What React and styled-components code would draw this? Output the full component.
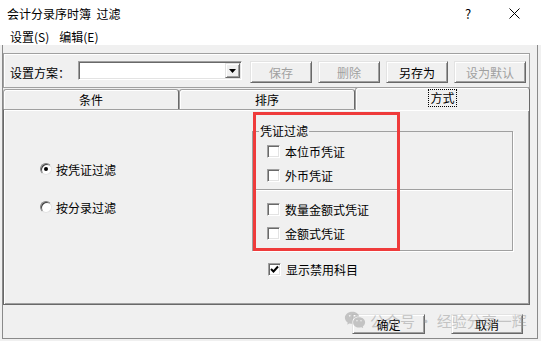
import React from "react";
import styled, { createGlobalStyle } from "styled-components";
import { RiWechatFill } from "react-icons/ri";

const GlobalStyle = createGlobalStyle`
  html, body {
    margin: 0;
    padding: 0;
    background: #f0f0f0;
  }
  body {
    font-family: "Noto Sans CJK SC", "Noto Sans", sans-serif;
    font-size: 12px;
    color: #000;
  }
`;

function App() {
  return (
    <Window>
      <GlobalStyle />
      <TitleBar>
        <TitleText>会计分录序时簿&nbsp;&nbsp;过滤</TitleText>
        <CaptionBtn>?</CaptionBtn>
        <CaptionBtn>
          <svg width="11" height="11" viewBox="0 0 11 11">
            <path d="M0.5 0.5 L10.5 10.5 M10.5 0.5 L0.5 10.5" stroke="#000" strokeWidth="1" />
          </svg>
        </CaptionBtn>
      </TitleBar>
      <MenuBar>
        <MenuItem>设置(S)</MenuItem>
        <MenuItem>编辑(E)</MenuItem>
      </MenuBar>

      <Frame>
        <Toolbar>
          <FieldLabel>设置方案：</FieldLabel>
          <Combo>
            <DropBtn>
              <svg width="7" height="4" viewBox="0 0 7 4">
                <path d="M0 0 H7 L3.5 4 Z" fill="#000" />
              </svg>
            </DropBtn>
          </Combo>
          <Button $w={62} disabled>保存</Button>
          <Button $w={62} disabled>删除</Button>
          <Button $w={62}>另存为</Button>
          <Button $w={72} disabled>设为默认</Button>
        </Toolbar>

        <TabRow>
          <Tab $w={176}>条件</Tab>
          <Tab $w={176}>排序</Tab>
          <Tab $w={175} $active>
            <Focus>方式</Focus>
          </Tab>
        </TabRow>

        <Content>
          <LeftCol>
            <RadioRow>
              <Radio $checked />
              按凭证过滤
            </RadioRow>
            <RadioRow>
              <Radio />
              按分录过滤
            </RadioRow>
          </LeftCol>
          <RightCol>
            <Group>
              <Legend>凭证过滤</Legend>
              <CheckRow>
                <Check />
                本位币凭证
              </CheckRow>
              <CheckRow>
                <Check />
                外币凭证
              </CheckRow>
              <Separator />
              <CheckRow>
                <Check />
                数量金额式凭证
              </CheckRow>
              <CheckRow>
                <Check />
                金额式凭证
              </CheckRow>
            </Group>
            <CheckRow $indent={16} $top={6}>
              <Check $checked>
                <svg width="9" height="9" viewBox="0 0 9 9">
                  <path d="M1 4 L3.5 6.5 L8 1.5" stroke="#000" strokeWidth="2" fill="none" />
                </svg>
              </Check>
              显示禁用科目
            </CheckRow>
          </RightCol>
        </Content>

        <ButtonBar>
          <Button $w={73} $h={20}>确定</Button>
          <Button $w={72} $h={20}>取消</Button>
        </ButtonBar>
      </Frame>

      <Highlight />
      <Watermark>
        <RiWechatFill size={22} />
        <span>公众号 · 经验分享一辉</span>
      </Watermark>
    </Window>
  );
}

export default App;

const Window = styled.div`
  position: relative;
  width: 541px;
  height: 341px;
  overflow: hidden;
  background: #f0f0f0;
`;

const TitleBar = styled.div`
  display: flex;
  align-items: center;
  height: 27px;
  padding: 0 4px 0 7px;
  background: #fff;
`;

const TitleText = styled.div`
  flex: 1;
  font-size: 12px;
`;

const CaptionBtn = styled.div`
  width: 46px;
  display: flex;
  align-items: center;
  justify-content: center;
  font-size: 13px;
`;

const MenuBar = styled.div`
  display: flex;
  align-items: center;
  gap: 10px;
  height: 18px;
  padding-left: 10px;
  background: #fff;
`;

const MenuItem = styled.span`
  font-size: 12px;
`;

const Frame = styled.div`
  margin-left: 2px;
  width: 536px;
  height: 294px;
  box-sizing: border-box;
  border: 1px solid #8a8a8a;
  border-top: none;
  padding-top: 8px;
  display: flex;
  flex-direction: column;
`;

const Toolbar = styled.div`
  width: 527px;
  height: 35px;
  box-sizing: border-box;
  border: 1px solid #a0a0a0;
  box-shadow: inset 1px 1px 0 #fff;
  display: flex;
  align-items: center;
  gap: 6px;
  padding: 3px 0 0 6px;
`;

const FieldLabel = styled.span`
  width: 60px;
  white-space: nowrap;
`;

const Combo = styled.div`
  width: 164px;
  height: 19px;
  box-sizing: border-box;
  margin: -3px 2px 0 2px;
  background: #fff;
  border: 1px solid;
  border-color: #a0a0a0 #fff #fff #a0a0a0;
  box-shadow: inset 1px 1px 0 #696969, inset -1px -1px 0 #e3e3e3;
  display: flex;
  justify-content: flex-end;
  align-items: center;
  padding-right: 1px;
`;

const DropBtn = styled.div`
  width: 15px;
  height: 15px;
  box-sizing: border-box;
  background: #f0f0f0;
  border: 1px solid;
  border-color: #e3e3e3 #696969 #696969 #e3e3e3;
  box-shadow: inset 1px 1px 0 #fff, inset -1px -1px 0 #a0a0a0;
  display: flex;
  align-items: center;
  justify-content: center;
`;

const Button = styled.button`
  width: ${(p) => p.$w}px;
  height: ${(p) => p.$h || 22}px;
  box-sizing: border-box;
  padding: 0;
  margin: 0;
  font-family: inherit;
  font-size: 12px;
  color: #000;
  background: #f0f0f0;
  border: 1px solid;
  border-color: #e3e3e3 #696969 #696969 #e3e3e3;
  box-shadow: inset 1px 1px 0 #fff, inset -1px -1px 0 #a0a0a0;
  &:disabled {
    color: #a0a0a0;
  }
`;

const TabRow = styled.div`
  display: flex;
  align-items: flex-end;
  width: 527px;
  height: 21px;
  position: relative;
  z-index: 1;
`;

const Tab = styled.div`
  width: ${(p) => p.$w}px;
  height: ${(p) => (p.$active ? 23 : 20)}px;
  margin-bottom: ${(p) => (p.$active ? -1 : 0)}px;
  box-sizing: border-box;
  background: #f0f0f0;
  border: 1px solid;
  border-color: #a0a0a0 #696969 transparent #a0a0a0;
  border-bottom: none;
  border-radius: 3px 3px 0 0;
  box-shadow: inset 1px 1px 0 #fff;
  display: flex;
  align-items: center;
  justify-content: center;
  padding-bottom: ${(p) => (p.$active ? 2 : 0)}px;
`;

const Focus = styled.span`
  outline: 1px dotted #000;
  outline-offset: 1px;
  line-height: 14px;
`;

const Content = styled.div`
  width: 527px;
  height: 196px;
  box-sizing: border-box;
  border: 1px solid;
  border-color: #a0a0a0 #696969 #696969 #696969;
  box-shadow: inset 1px 1px 0 #fff, inset -1px -1px 0 #a0a0a0;
  display: flex;
`;

const LeftCol = styled.div`
  width: 248px;
  padding: 49px 0 0 36px;
  box-sizing: border-box;
  display: flex;
  flex-direction: column;
  gap: 18px;
`;

const RadioRow = styled.label`
  display: flex;
  align-items: center;
  gap: 4px;
  height: 20px;
`;

const Radio = styled.span`
  position: relative;
  width: 12px;
  height: 12px;
  box-sizing: border-box;
  border-radius: 50%;
  background: #fff;
  border: 1px solid;
  border-color: #808080 #e3e3e3 #e3e3e3 #808080;
  box-shadow: inset 1px 1px 0 #404040;
  &::after {
    content: "";
    display: ${(p) => (p.$checked ? "block" : "none")};
    position: absolute;
    left: 3px;
    top: 3px;
    width: 4px;
    height: 4px;
    border-radius: 50%;
    background: #000;
  }
`;

const RightCol = styled.div`
  display: flex;
  flex-direction: column;
  padding-top: 13px;
`;

const Group = styled.fieldset`
  margin: 0;
  padding: 0 0 5px;
  width: 261px;
  min-width: 0;
  box-sizing: border-box;
  border: 1px solid #a0a0a0;
  box-shadow: 1px 1px 0 #fff;
`;

const Legend = styled.legend`
  padding: 0 1px;
  margin-left: 6px;
  line-height: 16px;
  font-size: 12px;
`;

const CheckRow = styled.label`
  display: flex;
  align-items: center;
  gap: 5px;
  height: 24px;
  padding-left: ${(p) => p.$indent || 14}px;
  margin-top: ${(p) => p.$top || 0}px;
`;

const Check = styled.span`
  width: 13px;
  height: 13px;
  box-sizing: border-box;
  background: #fff;
  border: 1px solid;
  border-color: #a0a0a0 #fff #fff #a0a0a0;
  box-shadow: inset 1px 1px 0 #696969, inset -1px -1px 0 #e3e3e3;
  display: flex;
  align-items: center;
  justify-content: center;
`;

const Separator = styled.div`
  height: 0;
  border-top: 1px solid #a0a0a0;
  border-bottom: 1px solid #fff;
  margin: 2px 0 6px;
`;

const ButtonBar = styled.div`
  display: flex;
  justify-content: flex-end;
  gap: 26px;
  padding: 9px 14px 0 0;
`;

const Highlight = styled.div`
  position: absolute;
  left: 253px;
  top: 112px;
  width: 147px;
  height: 139px;
  box-sizing: border-box;
  border: 3px solid #ef3b3b;
  pointer-events: none;
`;

const Watermark = styled.div`
  position: absolute;
  left: 344px;
  top: 309px;
  display: flex;
  align-items: center;
  gap: 4px;
  color: rgba(150, 150, 150, 0.5);
  font-size: 15px;
  white-space: nowrap;
  pointer-events: none;
`;
